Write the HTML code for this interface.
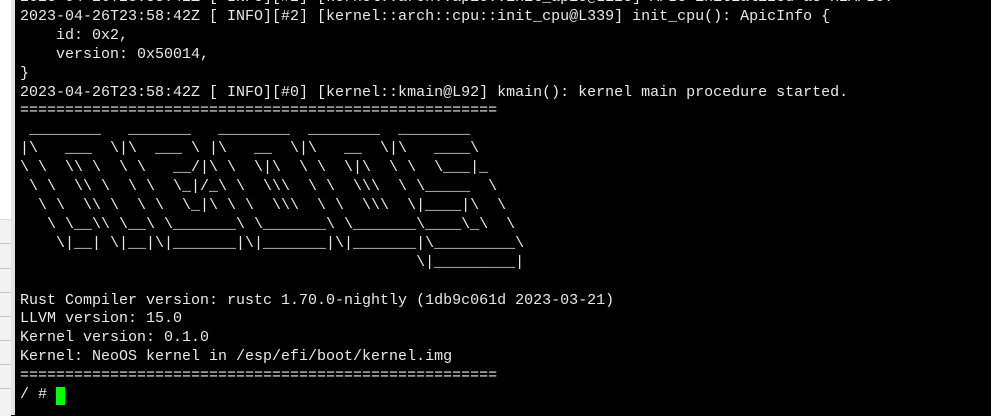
<!DOCTYPE html>
<html><head><meta charset="utf-8"><style>
html,body{margin:0;padding:0;width:991px;height:415px;overflow:hidden;background:#000;}
#side{position:absolute;left:0;top:0;width:11px;height:415px;background:#fff;}
#side2{position:absolute;left:0;top:219px;width:11px;height:196px;background:#f2f2f2;border-top:1px solid #ddd;}
.hl{position:absolute;left:0;width:11px;height:1px;background:#c8c8c8;}
#bord{position:absolute;left:11px;top:0;width:4px;height:415px;background:#e4e4e4;}
pre{position:absolute;left:20px;top:-11px;margin:0;font-family:"Liberation Mono","DejaVu Sans Mono",monospace;font-size:15px;line-height:18.9px;color:#e8e8e8;}
#cur{position:absolute;left:56px;top:387px;width:9px;height:18px;background:#00ff00;}
</style></head><body>
<div id="side"></div><div id="side2"></div>
<div class="hl" style="top:243px"></div><div class="hl" style="top:268px"></div><div class="hl" style="top:292px"></div><div class="hl" style="top:316px"></div><div class="hl" style="top:340px"></div><div class="hl" style="top:364px"></div><div class="hl" style="top:388px"></div>
<div id="bord"></div>
<pre>2023-04-26T23:58:42Z [ INFO][#2] [kernel::arch::apic::init_apic@L123] APIC initialized as x2APIC.
2023-04-26T23:58:42Z [ INFO][#2] [kernel::arch::cpu::init_cpu@L339] init_cpu(): ApicInfo {
    id: 0x2,
    version: 0x50014,
}
2023-04-26T23:58:42Z [ INFO][#0] [kernel::kmain@L92] kmain(): kernel main procedure started.
=====================================================
 ________   _______   ________  ________  ________
|\   ___  \|\  ___ \ |\   __  \|\   __  \|\   ____\
\ \  \\ \  \ \   __/|\ \  \|\  \ \  \|\  \ \  \___|_
 \ \  \\ \  \ \  \_|/_\ \  \\\  \ \  \\\  \ \_____  \
  \ \  \\ \  \ \  \_|\ \ \  \\\  \ \  \\\  \|____|\  \
   \ \__\\ \__\ \_______\ \_______\ \_______\____\_\  \
    \|__| \|__|\|_______|\|_______|\|_______|\_________\
                                            \|_________|

Rust Compiler version: rustc 1.70.0-nightly (1db9c061d 2023-03-21)
LLVM version: 15.0
Kernel version: 0.1.0
Kernel: NeoOS kernel in /esp/efi/boot/kernel.img
=====================================================
/ # </pre>
<div id="cur"></div>
</body></html>
